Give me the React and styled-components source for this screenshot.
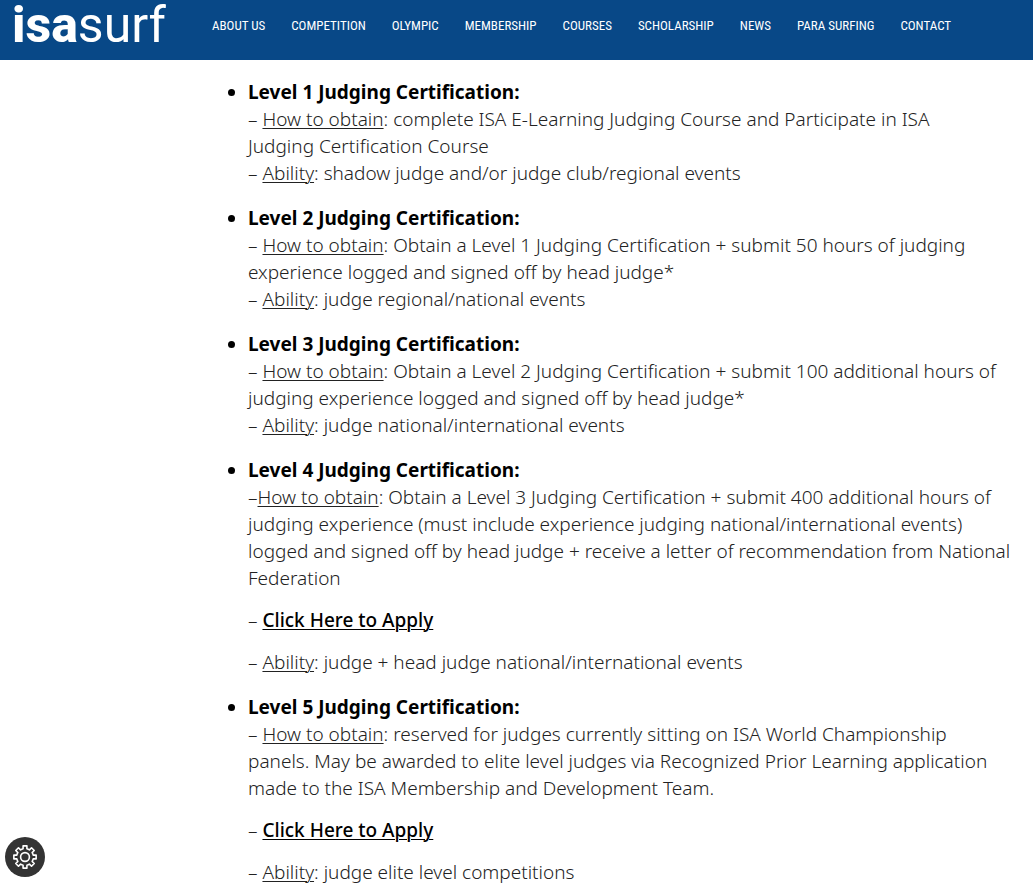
import React from 'react';
import styled, { createGlobalStyle } from 'styled-components';

const GlobalStyle = createGlobalStyle`
  * { box-sizing: border-box; }
  body {
    margin: 0;
    background: #fff;
    color: #222;
    font-family: "Noto Sans", "Liberation Sans", sans-serif;
  }
`;

const Header = styled.header`
  position: sticky;
  top: 0;
  z-index: 1;
  display: flex;
  align-items: flex-start;
  height: 60px;
  padding: 0 12px;
  background: #084887;
`;

const Logo = styled.a`
  flex: 0 0 200px;
  color: #fff;
  font: 400 50px/50px Roboto, sans-serif;
  text-decoration: none;
`;

const LogoStrong = styled.span`
  font-weight: 800;
`;

const Nav = styled.nav`
  display: flex;
  align-items: center;
  gap: 26px;
  height: 52px;
`;

const NavLink = styled.a`
  color: #fff;
  font: 400 13px/20px "Roboto Condensed", "Liberation Sans", sans-serif;
  text-decoration: none;
  text-transform: uppercase;
  white-space: nowrap;
`;

const Main = styled.main`
  padding: 19px 20px 0 248px;
`;

const Levels = styled.ul`
  display: flex;
  flex-direction: column;
  gap: 18px;
  margin: 0;
  padding: 0;
`;

const Level = styled.li`
  font-size: 19px;
  font-weight: 300;
  line-height: 27px;

  &::marker {
    color: #000;
  }
`;

const Title = styled.strong`
  display: block;
  color: #000;
  font-weight: 700;
`;

const Line = styled.p`
  margin: ${({ $spaced }) => ($spaced ? '15px 0 0' : '0')};
`;

const Term = styled.u`
  text-decoration-thickness: 1px;
  text-underline-offset: 2px;
`;

const ApplyLink = styled.a`
  color: #000;
  font-weight: 500;
  text-decoration-thickness: 1px;
  text-underline-offset: 2px;
`;

const SettingsButton = styled.button`
  position: fixed;
  left: 5px;
  bottom: 10px;
  display: grid;
  place-items: center;
  width: 40px;
  height: 40px;
  padding: 0;
  border: 0;
  border-radius: 50%;
  background: #333;
  color: #fff;
  cursor: pointer;
`;

const navItems = [
  'About Us', 'Competition', 'Olympic', 'Membership', 'Courses',
  'Scholarship', 'News', 'Para Surfing', 'Contact',
];

const levels = [
  {
    obtain: 'complete ISA E-Learning Judging Course and Participate in ISA Judging\u00a0Certification Course',
    ability: 'shadow judge and/or judge club/regional events',
  },
  {
    obtain: 'Obtain a Level 1 Judging Certification + submit 50 hours of judging experience logged and signed off by head judge*',
    ability: 'judge regional/national events',
  },
  {
    obtain: 'Obtain a Level 2 Judging Certification + submit 100 additional hours of judging experience logged and signed off by head judge*',
    ability: 'judge national/international events',
  },
  {
    obtain: 'Obtain a Level 3 Judging Certification + submit 400 additional hours of judging experience (must include experience judging national/international events) logged and signed off by head judge + receive a letter of recommendation from National Federation',
    ability: 'judge + head judge national/international events',
    tightDash: true,
    apply: true,
  },
  {
    obtain: 'reserved for judges currently sitting on ISA World Championship panels.\u00a0May be awarded to elite level judges via Recognized Prior Learning application made to the ISA Membership and Development Team.',
    ability: 'judge elite level competitions',
    apply: true,
  },
];

function gearPath() {
  const teeth = 8;
  const step = (Math.PI * 2) / teeth;
  const point = (r, a) => `${(13 + r * Math.sin(a)).toFixed(2)} ${(13 - r * Math.cos(a)).toFixed(2)}`;
  let path = '';
  for (let i = 0; i < teeth; i += 1) {
    const a = i * step;
    path += `${i === 0 ? 'M' : 'A8.4 8.4 0 0 1 '}${point(8.4, a - 0.23)}`;
    path += `L${point(11.3, a - 0.17)}L${point(11.3, a + 0.17)}L${point(8.4, a + 0.23)}`;
  }
  return `${path}A8.4 8.4 0 0 1 ${point(8.4, -0.23)}Z`;
}

function GearIcon() {
  return (
    <svg width="26" height="26" viewBox="0 0 26 26" fill="none" stroke="currentColor" strokeWidth="1.6" strokeLinejoin="round" aria-hidden="true">
      <path d={gearPath()} />
      <circle cx="13" cy="13" r="4.4" />
    </svg>
  );
}

export default function App() {
  return (
    <>
      <GlobalStyle />
      <Header>
        <Logo href="#home"><LogoStrong>isa</LogoStrong>surf</Logo>
        <Nav aria-label="Main">
          {navItems.map((item) => (
            <NavLink key={item} href={`#${item.toLowerCase().replace(' ', '-')}`}>{item}</NavLink>
          ))}
        </Nav>
      </Header>
      <Main>
        <Levels>
          {levels.map(({ obtain, ability, tightDash, apply }, index) => (
            <Level key={ability}>
              <Title>Level {index + 1} Judging Certification:</Title>
              <Line>–{tightDash ? '' : ' '}<Term>How to obtain</Term>: {obtain}</Line>
              {apply && (
                <Line $spaced>– <ApplyLink href={`#apply-level-${index + 1}`}>Click Here to Apply</ApplyLink></Line>
              )}
              <Line $spaced={apply}>– <Term>Ability</Term>: {ability}</Line>
            </Level>
          ))}
        </Levels>
      </Main>
      <SettingsButton type="button" aria-label="Cookie settings">
        <GearIcon />
      </SettingsButton>
    </>
  );
}
